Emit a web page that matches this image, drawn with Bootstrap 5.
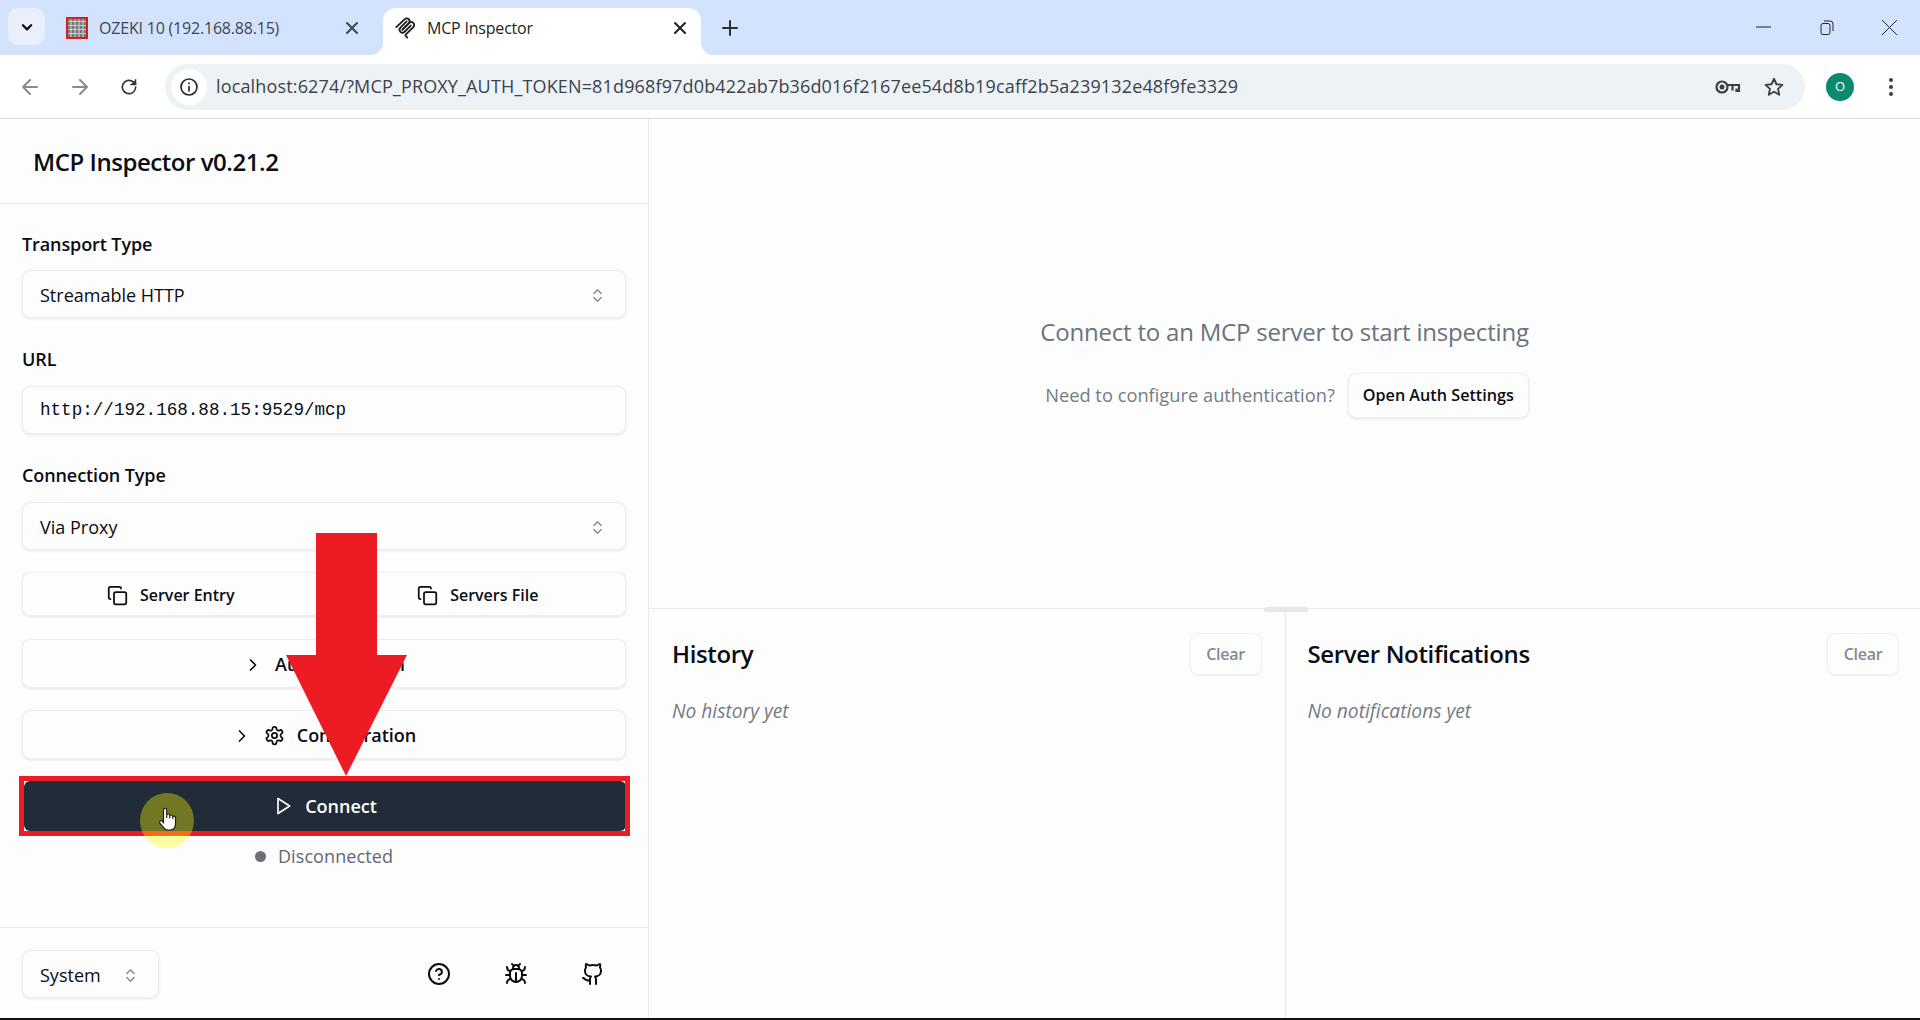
<!DOCTYPE html>
<html lang="en">
<head>
<meta charset="utf-8">
<title>MCP Inspector</title>
<link rel="stylesheet" href="https://cdn.jsdelivr.net/npm/bootstrap@5.3.0/dist/css/bootstrap.min.css">
<style>
:root{--ink:#0a0d14;--line:#e7e9ec;--mute:#69727d;--page:#fdfdfd}
html,body{height:100%}
body{width:1920px;height:1020px;overflow:hidden;background:var(--page);color:var(--ink);font-family:"Open Sans","Noto Sans",sans-serif;font-size:18px;letter-spacing:0;position:relative}
svg{display:block;flex:none}
.ico{fill:none;stroke:currentColor;stroke-width:2;stroke-linecap:round;stroke-linejoin:round}
.tabstrip{height:55px;background:#d3e3fd;padding-top:8px;flex:none}
.tabsearch{width:37px;height:37px;margin-left:8px;background:#e9f0fb;border-radius:10px}
.tabitem{height:47px;font-size:16px;letter-spacing:-.2px;padding-bottom:8px;position:relative}
.tab-one{width:338px;padding-left:21px;padding-right:24px;color:#3d4654}
.tab-two{width:318px;padding-left:11px;padding-right:14px;background:#fff;border-radius:13px 13px 0 0;color:#1c1f24}
.tab-two::before,.tab-two::after{content:"";position:absolute;bottom:0;width:13px;height:13px}
.tab-two::before{left:-13px;background:radial-gradient(circle at 0 0,transparent 13px,#fff 13.5px)}
.tab-two::after{right:-13px;background:radial-gradient(circle at 100% 0,transparent 13px,#fff 13.5px)}
.ozeki-mark{width:22px;height:22px;border:2px solid #d5201f;background:repeating-linear-gradient(0deg,transparent 0 3px,#ccc 3px 4px),repeating-linear-gradient(90deg,#777 0 2px,#aaa 2px 4px)}
.tabtitle{margin-left:11px}
.newtab{margin-left:20px;margin-top:-8px;color:#2a2f36}
.winctl{height:38px;color:#1f2630;gap:42px;padding-right:20px}
.toolbar{height:64px;background:#fff;border-bottom:1px solid #d9dde1;padding-left:21px;flex:none}
.navgroup{gap:32px;color:#868b92;width:144px}
.navgroup .reload{color:#33383e;margin-left:-2px}
.omni{width:1640px;height:46px;background:#edf2f6;border-radius:23px;padding-left:6px;padding-right:20px;font-size:18px;letter-spacing:.15px;color:#3b424a}
.chip{width:36px;height:36px;background:#fff;border-radius:50%;color:#26292e}
.urltext{margin-left:9px}
.stargap{margin-left:22px}
.avatar{width:28px;height:28px;background:#0b8a70;color:#fff;border-radius:50%;font-size:13px;margin-left:21px}
.menudots{margin-left:34px}
.appframe{flex:1;min-height:0;border-bottom:2px solid #111}
.sidepane{width:649px;border-right:1px solid var(--line);flex:none}
.sidehead{height:85px;border-bottom:1px solid var(--line);padding-left:33px;padding-top:1px;font-size:24px;font-weight:600;letter-spacing:-.45px;flex:none}
.sidebody{padding:28px 22px 0}
.fieldlabel{height:24px;line-height:24px;margin:0 0 14px;font-weight:600;font-size:18px;letter-spacing:-.1px}
.fieldgap{margin-top:29px;margin-bottom:15px}
.shadbox{height:48px;background:#fdfdfd;border:1px solid #eceef0;border-radius:8px;box-shadow:0 1px 3px rgba(0,0,0,.09);padding:2px 19px 0 17px;color:var(--ink);font-size:18px}
.shadbox:hover{background:#fdfdfd;border-color:#eceef0;color:var(--ink)}
.updown{color:#8b9096}
.mono{font-family:"Liberation Mono",monospace;font-size:17.6px;padding-top:0}
.pairbtn{margin-top:22px;height:44px}
.pairbtn .shadbox{height:44px;width:100%;justify-content:center;gap:12px;font-size:16px;font-weight:600}
.pairbtn .leftb{border-radius:8px 0 0 8px;border-right:0;padding:2px 5px 0 0}
.pairbtn .rightb{border-radius:0 8px 8px 0;border-left:0;padding:2px 0 0 7px}
.widebtn{margin-top:23px;height:49px;width:100%;justify-content:center;font-weight:600;gap:12px;padding:2px 0 0}
.widebtn.second{margin-top:22px}
.connectbtn{margin-top:22px;height:50px;width:602px;margin-left:2px;background:#222b38;border:0;border-radius:6px;color:#fff;font-weight:600;gap:12px;font-size:18px}
.connectbtn:hover{background:#222b38;color:#fff}
.statusline{margin-top:13px;height:24px;gap:12px;color:#5f6873;letter-spacing:.1px}
.statusdot{width:11px;height:11px;background:#6b7076;border-radius:50%}
.sidefoot{height:91px;border-top:1px solid var(--line);padding:22px 22px 0;flex:none}
.sysbox{width:137px;height:48px}
.footicons{gap:53px;padding-right:21px;padding-bottom:20px;color:#0a0d14}
.mainpane{min-width:0;position:relative}
.inspect{height:490px;border-bottom:1px solid var(--line);padding-top:4px;flex:none}
.inspect-head{font-size:24px;color:#6a737d;line-height:36px;margin-bottom:23px;letter-spacing:-.2px}
.inspect-row{gap:13px;color:#747c86;font-size:18.3px;padding-left:5px}
.authbtn{height:45px;width:181px;padding:0;justify-content:center;font-weight:600;font-size:16.2px}
.logpane{padding:24px 23px 0;min-width:0}
.logpane+.logpane{border-left:1px solid var(--line);padding-left:22px;padding-right:21px}
.logtitle{font-size:24px;font-weight:600;letter-spacing:-.35px;margin:0}
.clearbtn{width:72px;height:42px;padding:0;justify-content:center;color:#858b92;font-size:16px;font-weight:600;box-shadow:0 1px 2px rgba(0,0,0,.05);border-color:#f1f2f3;letter-spacing:-.3px}
.clearbtn:hover{color:#858b92;border-color:#f1f2f3}
.logempty{margin-top:24px;line-height:24px;font-style:italic;color:#737b85;font-size:19.2px}
.splitgrip{position:absolute;left:615px;top:488px;width:44px;height:5px;background:#e5e7e9;border-radius:3px}
.redbox{position:absolute;left:19px;top:776px;width:611px;height:60px;border:5px solid #ed1c24;pointer-events:none}
.redarrow{position:absolute;left:279px;top:533px;pointer-events:none}
.cursorhalo{position:absolute;left:140px;top:793px;width:54px;height:55px;border-radius:50%;background:rgba(255,255,0,.36)}
.cursorhand{position:absolute;left:158px;top:806px}
</style>
</head>
<body class="d-flex flex-column">
  <div class="tabstrip d-flex align-items-start">
    <div class="tabsearch d-flex align-items-center justify-content-center">
      <svg width="14" height="14" viewBox="0 0 24 24" class="ico" style="stroke-width:4"><path d="m5 9 7 7 7-7"/></svg>
    </div>
    <div class="tabitem tab-one d-flex align-items-center">
      <span class="ozeki-mark"></span><span class="tabtitle flex-grow-1">OZEKI 10 (192.168.88.15)</span>
      <svg width="14" height="14" viewBox="0 0 14 14" class="ico"><path d="m2 2 10 10M12 2 2 12"/></svg>
    </div>
    <div class="tabitem tab-two d-flex align-items-center">
      <svg width="22" height="22" viewBox="0 0 24 24" class="ico"><path d="M2.5 11 11.5 2.5a3.2 3.2 0 0 1 4.6 4.5L9 14"/><path d="m9.5 13.5 7-7a3.2 3.2 0 0 1 4.6 4.5l-8.3 8.2a1 1 0 0 0 0 1.5l1.7 1.7"/><path d="M13.8 4.8 7 11.6a3.2 3.2 0 0 0 4.6 4.5l6.7-6.8"/></svg>
      <span class="tabtitle flex-grow-1">MCP Inspector</span>
      <svg width="14" height="14" viewBox="0 0 14 14" class="ico"><path d="m2 2 10 10M12 2 2 12"/></svg>
    </div>
    <div class="newtab align-self-center">
      <svg width="18" height="18" viewBox="0 0 18 18" class="ico"><path d="M9 2v14M2 9h14"/></svg>
    </div>
    <div class="winctl d-flex align-items-center ms-auto">
      <svg width="21" height="14" viewBox="0 0 21 14" fill="none" stroke="currentColor"><path d="M3 7h15"/></svg>
      <svg width="21" height="21" viewBox="0 0 21 21" fill="none" stroke="currentColor"><rect x="5" y="6.5" width="9" height="11" rx="2"/><path d="M8 4h6a3 3 0 0 1 3 3v7"/></svg>
      <svg width="21" height="21" viewBox="0 0 21 21" fill="none" stroke="currentColor"><path d="m3 3 15 15M18 3 3 18"/></svg>
    </div>
  </div>

  <div class="toolbar d-flex align-items-center">
    <div class="navgroup d-flex align-items-center">
      <svg width="18" height="18" viewBox="0 0 18 18" class="ico"><path d="M16 9H2M9 2 2 9l7 7"/></svg>
      <svg width="18" height="18" viewBox="0 0 18 18" class="ico"><path d="M2 9h14M9 2l7 7-7 7"/></svg>
      <svg class="reload ico" width="20" height="20" viewBox="0 0 24 24"><path d="M20 12a8 8 0 1 1-2.4-5.7L20 8.5"/><path d="M20 3v6h-6" fill="currentColor" stroke-width="1.5"/></svg>
    </div>
    <div class="omni d-flex align-items-center">
      <span class="chip d-flex align-items-center justify-content-center">
        <svg width="20" height="20" viewBox="0 0 20 20" fill="none" stroke="currentColor" stroke-width="1.7"><circle cx="10" cy="10" r="8"/><path d="M10 9v5.5M10 5.5v1.8"/></svg>
      </span>
      <span class="urltext flex-grow-1">localhost:6274/?MCP_PROXY_AUTH_TOKEN=81d968f97d0b422ab7b36d016f2167ee54d8b19caff2b5a239132e48f9fe3329</span>
      <svg width="26" height="18" viewBox="0 0 26 18" fill="none" stroke="#3c4043" stroke-width="2.2"><circle cx="7" cy="9" r="5.5"/><circle cx="7" cy="9" r="1.4" fill="#3c4043"/><path d="M12.5 7H24v6h-2.5v-2.5M17.5 7v5.5"/></svg>
      <svg class="stargap" width="22" height="22" viewBox="0 0 24 24" fill="none" stroke="#3c4043" stroke-width="2" stroke-linejoin="round"><path d="m12 3 2.7 6 6.5.7-4.8 4.4 1.3 6.4L12 17.2l-5.7 3.3 1.3-6.4-4.8-4.4 6.5-.7z"/></svg>
    </div>
    <div class="avatar d-flex align-items-center justify-content-center">O</div>
    <svg class="menudots" width="6" height="20" viewBox="0 0 6 20" fill="#3c4043"><circle cx="3" cy="3" r="2"/><circle cx="3" cy="10" r="2"/><circle cx="3" cy="17" r="2"/></svg>
  </div>

  <div class="appframe d-flex">
    <aside class="sidepane d-flex flex-column">
      <div class="sidehead d-flex align-items-center">MCP Inspector v0.21.2</div>
      <div class="sidebody flex-grow-1">
        <div class="fieldlabel">Transport Type</div>
        <button class="btn shadbox w-100 d-flex align-items-center justify-content-between" type="button">Streamable HTTP
          <svg class="ico updown" width="17" height="17" viewBox="0 0 24 24" stroke-width="1.7"><path d="m7 15 5 5 5-5"/><path d="m7 9 5-5 5 5"/></svg>
        </button>
        <div class="fieldlabel fieldgap">URL</div>
        <div class="shadbox mono d-flex align-items-center">http://192.168.88.15:9529/mcp</div>
        <div class="fieldlabel fieldgap">Connection Type</div>
        <button class="btn shadbox w-100 d-flex align-items-center justify-content-between" type="button">Via Proxy
          <svg class="ico updown" width="17" height="17" viewBox="0 0 24 24" stroke-width="1.7"><path d="m7 15 5 5 5-5"/><path d="m7 9 5-5 5 5"/></svg>
        </button>
        <div class="pairbtn d-flex">
          <button class="btn shadbox leftb d-flex align-items-center" type="button">
            <svg class="ico" width="21" height="21" viewBox="0 0 24 24"><rect x="8" y="8" width="14" height="14" rx="2"/><path d="M4 16c-1.1 0-2-.9-2-2V4c0-1.1.9-2 2-2h10c1.1 0 2 .9 2 2"/></svg>Server Entry</button>
          <button class="btn shadbox rightb d-flex align-items-center" type="button">
            <svg class="ico" width="21" height="21" viewBox="0 0 24 24"><rect x="8" y="8" width="14" height="14" rx="2"/><path d="M4 16c-1.1 0-2-.9-2-2V4c0-1.1.9-2 2-2h10c1.1 0 2 .9 2 2"/></svg>Servers File</button>
        </div>
        <button class="btn shadbox widebtn d-flex align-items-center" type="button">
          <svg class="ico" width="20" height="20" viewBox="0 0 24 24"><path d="m9 18 6-6-6-6"/></svg>Authentication</button>
        <button class="btn shadbox widebtn second d-flex align-items-center" type="button">
          <svg class="ico" width="20" height="20" viewBox="0 0 24 24"><path d="m9 18 6-6-6-6"/></svg>
          <svg class="ico" width="21" height="21" viewBox="0 0 24 24"><path d="M12.22 2h-.44a2 2 0 0 0-2 2v.18a2 2 0 0 1-1 1.73l-.43.25a2 2 0 0 1-2 0l-.15-.08a2 2 0 0 0-2.73.73l-.22.38a2 2 0 0 0 .73 2.73l.15.1a2 2 0 0 1 1 1.72v.51a2 2 0 0 1-1 1.74l-.15.09a2 2 0 0 0-.73 2.73l.22.38a2 2 0 0 0 2.73.73l.15-.08a2 2 0 0 1 2 0l.43.25a2 2 0 0 1 1 1.73V20a2 2 0 0 0 2 2h.44a2 2 0 0 0 2-2v-.18a2 2 0 0 1 1-1.73l.43-.25a2 2 0 0 1 2 0l.15.08a2 2 0 0 0 2.73-.73l.22-.39a2 2 0 0 0-.73-2.73l-.15-.08a2 2 0 0 1-1-1.74v-.5a2 2 0 0 1 1-1.74l.15-.09a2 2 0 0 0 .73-2.73l-.22-.38a2 2 0 0 0-2.73-.73l-.15.08a2 2 0 0 1-2 0l-.43-.25a2 2 0 0 1-1-1.73V4a2 2 0 0 0-2-2z"/><circle cx="12" cy="12" r="3"/></svg>Configuration</button>
        <button class="btn connectbtn d-flex align-items-center justify-content-center" type="button">
          <svg class="ico" width="20" height="20" viewBox="0 0 24 24"><polygon points="6 3 20 12 6 21 6 3"/></svg>Connect</button>
        <div class="statusline d-flex align-items-center justify-content-center">
          <span class="statusdot"></span><span>Disconnected</span>
        </div>
      </div>
      <div class="sidefoot d-flex justify-content-between">
        <button class="btn shadbox sysbox d-flex align-items-center justify-content-between" type="button">System
          <svg class="ico updown" width="17" height="17" viewBox="0 0 24 24" stroke-width="1.7"><path d="m7 15 5 5 5-5"/><path d="m7 9 5-5 5 5"/></svg>
        </button>
        <div class="footicons d-flex align-items-center">
          <svg class="ico" width="24" height="24" viewBox="0 0 24 24"><circle cx="12" cy="12" r="10"/><path d="M9.09 9a3 3 0 0 1 5.83 1c0 2-3 3-3 3"/><path d="M12 17h.01"/></svg>
          <svg class="ico" width="24" height="24" viewBox="0 0 24 24"><path d="m8 2 1.88 1.88"/><path d="M14.12 3.88 16 2"/><path d="M9 7.13v-1a3.003 3.003 0 1 1 6 0v1"/><path d="M12 20c-3.3 0-6-2.7-6-6v-3a4 4 0 0 1 4-4h4a4 4 0 0 1 4 4v3c0 3.3-2.7 6-6 6"/><path d="M12 20v-9"/><path d="M6.53 9C4.6 8.8 3 7.1 3 5"/><path d="M6 13H2"/><path d="M3 21c0-2.1 1.7-3.9 3.8-4"/><path d="M20.97 5c0 2.1-1.6 3.8-3.5 4"/><path d="M22 13h-4"/><path d="M17.2 17c2.1.1 3.8 1.9 3.8 4"/></svg>
          <svg class="ico" width="24" height="24" viewBox="0 0 24 24"><path d="M15 22v-4a4.8 4.8 0 0 0-1-3.5c3 0 6-2 6-5.5.08-1.25-.27-2.48-1-3.5.28-1.15.28-2.35 0-3.5 0 0-1 0-3 1.5-2.64-.5-5.36-.5-8 0C6 2 5 2 5 2c-.3 1.15-.3 2.35 0 3.5A5.403 5.403 0 0 0 4 9c0 3.5 3 5.5 6 5.5-.39.49-.68 1.05-.85 1.65-.17.6-.22 1.23-.15 1.85v4"/><path d="M9 18c-4.51 2-5-2-7-2"/></svg>
        </div>
      </div>
    </aside>

    <main class="mainpane flex-grow-1 d-flex flex-column">
      <section class="inspect d-flex flex-column align-items-center justify-content-center">
        <div class="inspect-head">Connect to an MCP server to start inspecting</div>
        <div class="inspect-row d-flex align-items-center">
          <span>Need to configure authentication?</span>
          <button class="btn shadbox authbtn d-flex align-items-center" type="button">Open Auth Settings</button>
        </div>
      </section>
      <section class="flex-grow-1 d-flex">
        <div class="logpane w-50">
          <div class="d-flex align-items-center justify-content-between">
            <h2 class="logtitle">History</h2>
            <button class="btn shadbox clearbtn d-flex align-items-center" type="button">Clear</button>
          </div>
          <p class="logempty mb-0">No history yet</p>
        </div>
        <div class="logpane w-50">
          <div class="d-flex align-items-center justify-content-between">
            <h2 class="logtitle">Server Notifications</h2>
            <button class="btn shadbox clearbtn d-flex align-items-center" type="button">Clear</button>
          </div>
          <p class="logempty mb-0">No notifications yet</p>
        </div>
      </section>
      <div class="splitgrip"></div>
    </main>
  </div>

  <div class="redbox"></div>
  <svg class="redarrow" width="134" height="244" viewBox="0 0 134 244"><polygon fill="#ed1c24" points="37,0 98,0 98,122 128,122 67,243 7,122 37,122"/></svg>
  <div class="cursorhalo"></div>
  <svg class="cursorhand" width="20" height="28" viewBox="0 0 20 28"><path fill="#fff" stroke="#222" stroke-width="1.2" stroke-linejoin="round" d="M5.5 17V4a1.6 1.6 0 0 1 3.2 0v7.5-2a1.5 1.5 0 0 1 3 0v2.5-1.5a1.5 1.5 0 0 1 3 0v2-1a1.4 1.4 0 0 1 2.8 0v6c0 4-2 6.5-5.5 6.5h-2c-2.5 0-3.7-1.2-5-3.2L1.7 17a1.6 1.6 0 0 1 2.6-1.8z"/></svg>

<script src="https://cdn.jsdelivr.net/npm/bootstrap@5.3.0/dist/js/bootstrap.bundle.min.js"></script>
</body>
</html>
